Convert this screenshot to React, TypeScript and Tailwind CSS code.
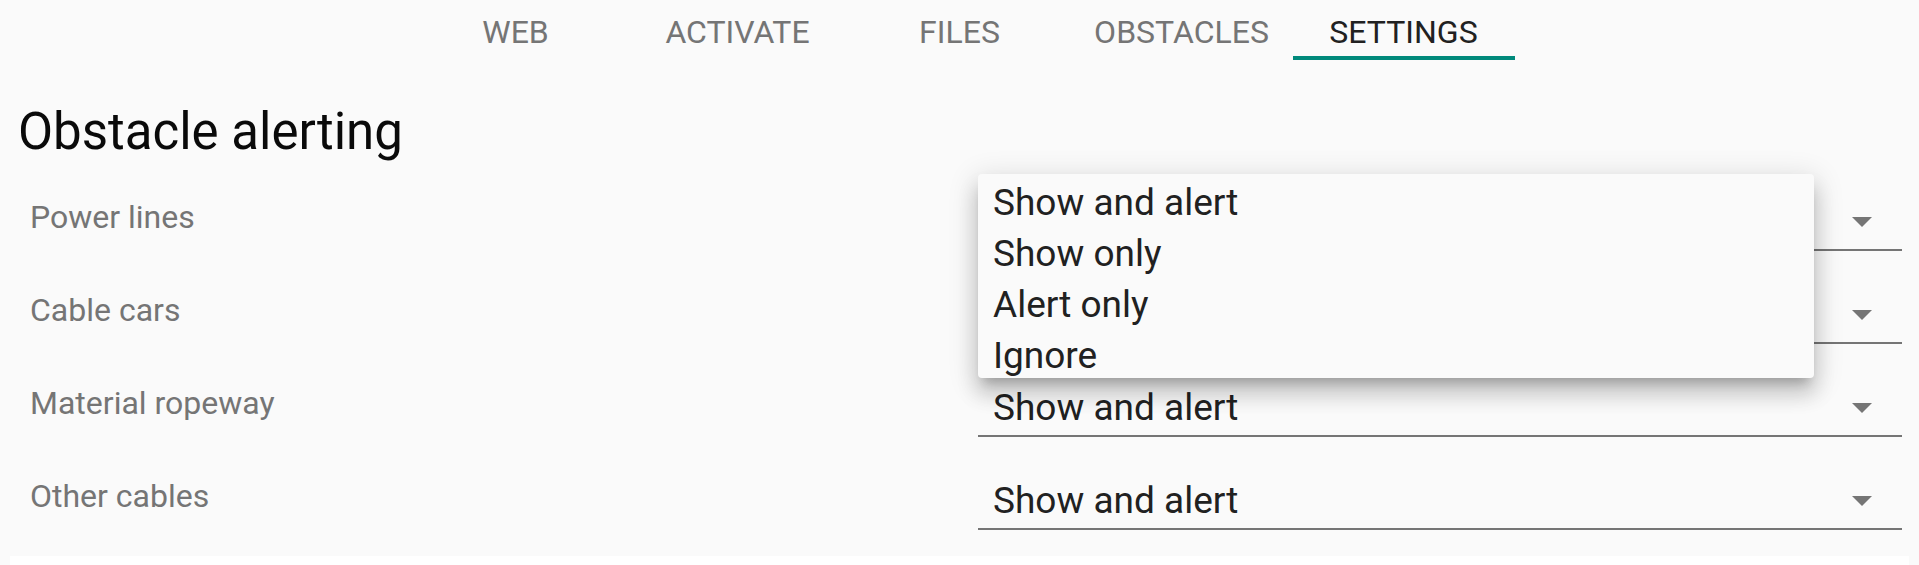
import React from 'react';

const tabs = ['WEB', 'ACTIVATE', 'FILES', 'OBSTACLES', 'SETTINGS'];
const activeTab = 'SETTINGS';

const rows = [
  { label: 'Power lines', value: 'Show and alert' },
  { label: 'Cable cars', value: 'Show and alert' },
  { label: 'Material ropeway', value: 'Show and alert' },
  { label: 'Other cables', value: 'Show and alert' },
];

const options = ['Show and alert', 'Show only', 'Alert only', 'Ignore'];

const Caret: React.FC = () => (
  <svg width="20" height="10" viewBox="0 0 20 10" className="shrink-0">
    <path d="M0 0h20L10 10z" fill="#757575" />
  </svg>
);

const TabBar: React.FC = () => (
  <nav className="flex justify-center h-[60px]">
    {tabs.map(tab => {
      const active = tab === activeTab;
      return (
        <div key={tab} className="w-[222px] flex flex-col items-center">
          <span
            className={`pt-[13px] text-[32px] leading-[38px] font-normal ${
              active ? 'text-[#212121]' : 'text-[#757575]'
            }`}
          >
            {tab}
          </span>
          <div className={`mt-auto h-[4px] w-full ${active ? 'bg-[#00897b]' : ''}`} />
        </div>
      );
    })}
  </nav>
);

const SelectRow: React.FC<{ label: string; value: string }> = ({ label, value }) => (
  <div className="flex items-end h-[93px]">
    <div className="flex-1 pl-[30px] mb-[12px] text-[32px] leading-[44px] text-[#757575]">
      {label}
    </div>
    <div className="w-[924px] mr-[17px] flex items-center pl-[15px] pr-[30px] pb-[5px] border-b-2 border-[#757575]">
      <span className="flex-1 text-[37px] leading-[44px] text-[#212121]">{value}</span>
      <Caret />
    </div>
  </div>
);

export default function App() {
  return (
    <div className="min-h-screen bg-[#fafafa] font-['Roboto',sans-serif] overflow-hidden">
      <TabBar />

      <h1 className="mt-[46px] pl-[18px] text-[51px] leading-[52px] text-[#0a0a0a]">
        Obstacle alerting
      </h1>

      <div className="relative">
        {rows.map(row => (
          <SelectRow key={row.label} label={row.label} value={row.value} />
        ))}

        {/* open menu of the first select */}
        <ul className="absolute left-[978px] top-[16px] w-[836px] h-[204px] pt-[3px] bg-[#fafafa] rounded-[4px] shadow-[0_10px_10px_-6px_rgba(0,0,0,0.2),0_16px_20px_2px_rgba(0,0,0,0.14),0_6px_28px_4px_rgba(0,0,0,0.12)]">
          {options.map(opt => (
            <li key={opt} className="pl-[15px] text-[37px] leading-[51px] text-[#212121]">
              {opt}
            </li>
          ))}
        </ul>
      </div>

      <div className="mt-[26px] mx-[10px] h-[60px] bg-white" />
    </div>
  );
}
